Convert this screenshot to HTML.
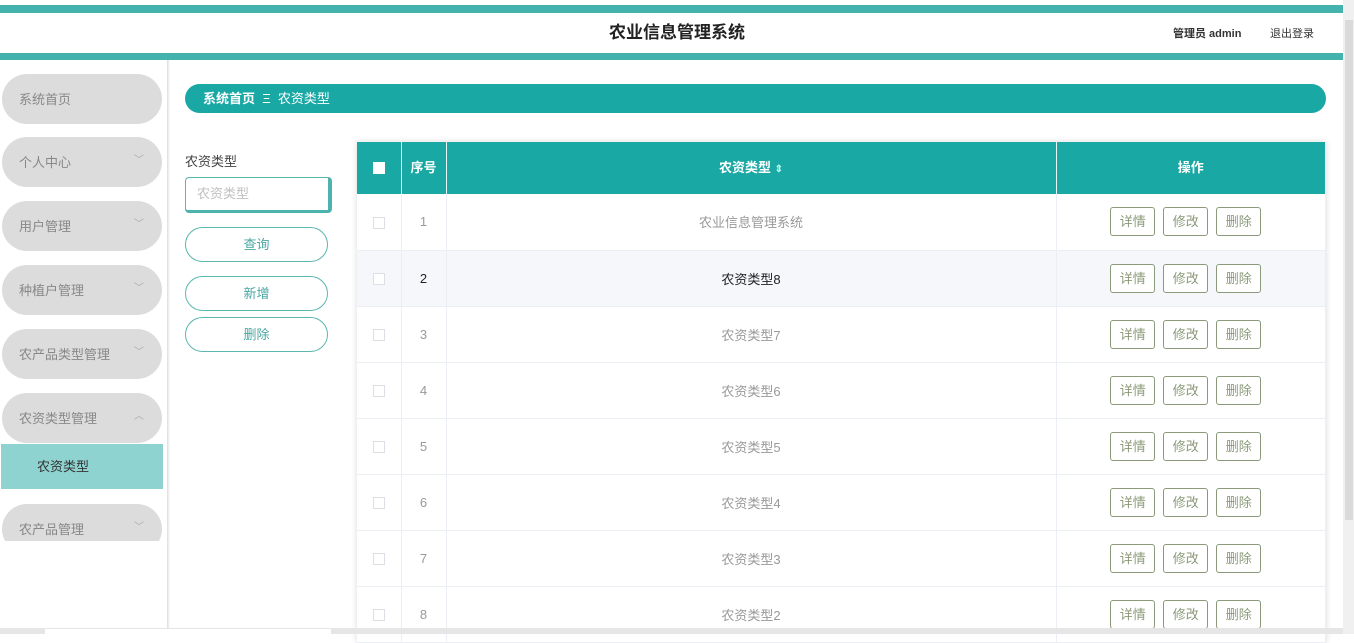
<!DOCTYPE html>
<html><head><meta charset="utf-8"><style>
*{margin:0;padding:0;box-sizing:border-box}
body{width:1354px;height:634px;overflow:hidden;background:#fff;position:relative;font-family:"Liberation Sans","Noto Sans CJK SC",sans-serif;font-size:13px;color:#666}
.a{position:absolute}
.pill{position:absolute;left:2px;width:160px;height:50px;background:#dcdcdc;border-radius:25px;color:#888;font-size:13px;line-height:52px;padding-left:17px}
.pill .ch{position:absolute;right:18px;top:-2px;color:#aaa;font-size:10px}
.btn{position:absolute;left:185px;width:143px;height:35px;border:1px solid #5bb6b0;border-radius:18px;text-align:center;line-height:33px;color:#4aa6a0;font-size:13px}
table{position:absolute;left:357px;top:142px;width:969px;border-collapse:collapse;box-shadow:0 0 6px rgba(0,0,0,.15)}
th{background:#1aa8a5;color:#fff;height:52px;font-size:13px;font-weight:bold;border-right:1px solid #e6f4f3;padding-bottom:3px}
td{height:56px;border-right:1px solid #ebeef5;border-bottom:1px solid #ebeef5;text-align:center;color:#999;font-size:13px}
tr.hl td{background:#f5f7fa;color:#222}
.cb{display:inline-block;width:12px;height:12px;border:1px solid #dcdfe6;background:#fff;vertical-align:middle}
.ob{display:inline-block;width:45px;height:29px;border:1px solid #8a9a7a;border-radius:3px;line-height:27px;color:#8a9a7a;margin:0 4px;font-size:13px;background:#fff}
</style></head><body>
<div class="a" style="left:0;top:5px;width:1343px;height:8px;background:#45b3ad"></div>
<div class="a" style="left:0;top:53px;width:1343px;height:7px;background:#45b3ad"></div>
<div class="a" style="left:0;top:20px;width:1354px;text-align:center;font-size:17px;font-weight:bold;color:#222;line-height:26px">农业信息管理系统</div>
<div class="a" style="left:1173px;top:25px;font-size:11px;font-weight:bold;color:#333">管理员 admin</div>
<div class="a" style="left:1270px;top:25px;font-size:11px;color:#333">退出登录</div>
<div class="a" style="left:1343px;top:0;width:11px;height:634px;background:#f0f0f0"></div>
<div class="a" style="left:1345px;top:20px;width:8px;height:500px;background:#dadada"></div>
<div class="a" style="left:167px;top:60px;width:3px;height:568px;background:linear-gradient(90deg,#ddd,#fff)"></div>

<div class="pill" style="top:74px">系统首页</div>
<div class="pill" style="top:137px">个人中心<span class="ch">﹀</span></div>
<div class="pill" style="top:201px">用户管理<span class="ch">﹀</span></div>
<div class="pill" style="top:265px">种植户管理<span class="ch">﹀</span></div>
<div class="pill" style="top:329px">农产品类型管理<span class="ch">﹀</span></div>
<div class="pill" style="top:393px">农资类型管理<span class="ch">︿</span></div>
<div class="a" style="left:1px;top:444px;width:162px;height:45px;background:#8fd3d1;color:#333;line-height:45px;padding-left:36px">农资类型</div>
<div class="a" style="left:2px;top:504px;width:160px;height:37px;overflow:hidden"><div class="pill" style="left:0;top:0">农产品管理<span class="ch">﹀</span></div></div>

<div class="a" style="left:185px;top:84px;width:1141px;height:29px;background:#1aa8a5;border-radius:15px;color:#fff;line-height:29px;padding-left:18px;font-size:13px"><b>系统首页</b>&nbsp; Ξ &nbsp;农资类型</div>

<div class="a" style="left:185px;top:151px;color:#444">农资类型</div>
<div class="a" style="left:185px;top:177px;width:147px;height:36px;border:1px solid #5bb6b0;border-right:4px solid #4fb3ad;border-bottom:3px solid #4fb3ad;border-radius:4px;color:#c0c0c0;line-height:31px;padding-left:11px">农资类型</div>
<div class="btn" style="top:227px">查询</div>
<div class="btn" style="top:276px">新增</div>
<div class="btn" style="top:317px">删除</div>

<table>
<tr><th style="width:44px"><span class="cb" style="border:none"></span></th><th style="width:45px">序号</th><th style="width:610px">农资类型 <span style="font-size:10px;color:#bfe">⇕</span></th><th>操作</th></tr>
<tr><td><span class="cb"></span></td><td>1</td><td>农业信息管理系统</td><td style="padding-right:10px"><span class="ob">详情</span><span class="ob">修改</span><span class="ob">删除</span></td></tr>
<tr class="hl"><td><span class="cb"></span></td><td>2</td><td>农资类型8</td><td style="padding-right:10px"><span class="ob">详情</span><span class="ob">修改</span><span class="ob">删除</span></td></tr>
<tr><td><span class="cb"></span></td><td>3</td><td>农资类型7</td><td style="padding-right:10px"><span class="ob">详情</span><span class="ob">修改</span><span class="ob">删除</span></td></tr>
<tr><td><span class="cb"></span></td><td>4</td><td>农资类型6</td><td style="padding-right:10px"><span class="ob">详情</span><span class="ob">修改</span><span class="ob">删除</span></td></tr>
<tr><td><span class="cb"></span></td><td>5</td><td>农资类型5</td><td style="padding-right:10px"><span class="ob">详情</span><span class="ob">修改</span><span class="ob">删除</span></td></tr>
<tr><td><span class="cb"></span></td><td>6</td><td>农资类型4</td><td style="padding-right:10px"><span class="ob">详情</span><span class="ob">修改</span><span class="ob">删除</span></td></tr>
<tr><td><span class="cb"></span></td><td>7</td><td>农资类型3</td><td style="padding-right:10px"><span class="ob">详情</span><span class="ob">修改</span><span class="ob">删除</span></td></tr>
<tr><td><span class="cb"></span></td><td>8</td><td>农资类型2</td><td style="padding-right:10px"><span class="ob">详情</span><span class="ob">修改</span><span class="ob">删除</span></td></tr>
</table>
<div class="a" style="left:373px;top:162px;width:12px;height:12px;background:#fff;border-radius:2px"></div>
<div class="a" style="left:0;top:628px;width:1343px;height:6px;background:#e6e6e6"></div>
<div class="a" style="left:45px;top:629px;width:286px;height:5px;background:#fff"></div>
</body></html>
